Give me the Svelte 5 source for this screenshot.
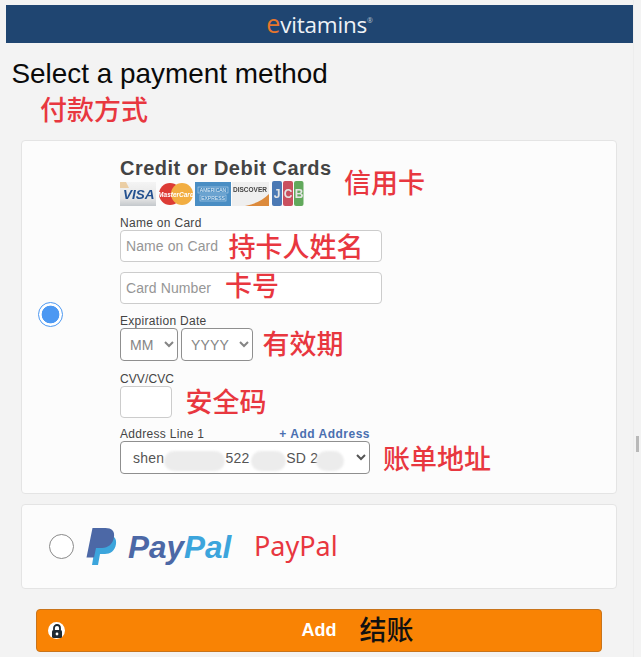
<script lang="ts">
  let method = $state('card')

  const notes = [
    { cls: 'n-title', text: '付款方式' },
    { cls: 'n-card', text: '信用卡' },
    { cls: 'n-name', text: '持卡人姓名' },
    { cls: 'n-number', text: '卡号' },
    { cls: 'n-exp', text: '有效期' },
    { cls: 'n-cvv', text: '安全码' },
    { cls: 'n-addr', text: '账单地址' },
    { cls: 'n-paypal', text: 'PayPal' },
    { cls: 'n-pay', text: '结账' }
  ]
</script>

<div class="screen">
  <div class="page">
    <header class="brand">
      <span class="logo"><span class="logo-e">e</span>vitamins<sup>®</sup></span>
    </header>

    <h1>Select a payment method</h1>

    <section class="card method-card">
      <div class="radio-col">
        <input type="radio" name="method" value="card" bind:group={method} />
      </div>
      <div class="form-col">
        <h2>Credit or Debit Cards</h2>
        <div class="brands">
          <svg width="184" height="26" viewBox="0 0 184 26">
            <defs>
              <linearGradient id="silver" x1="0" y1="0" x2="0" y2="1">
                <stop offset="0" stop-color="#f4f4f4" />
                <stop offset="0.7" stop-color="#e4e4e4" />
                <stop offset="1" stop-color="#c4c8cc" />
              </linearGradient>
            </defs>
            <!-- visa -->
            <rect x="0" y="1" width="36" height="24" fill="url(#silver)" />
            <path d="M0 1h6l3 6H0z" fill="#e8b872" opacity="0.6" />
            <text x="3" y="18" class="visa">VISA</text>
            <!-- mastercard -->
            <circle cx="50" cy="13" r="11" fill="#dd3b35" />
            <circle cx="62" cy="13" r="11" fill="#f2ae42" />
            <text x="56" y="15.5" class="mc">MasterCard</text>
            <!-- amex -->
            <rect x="75" y="1" width="36" height="24" fill="#4a8ec4" />
            <rect x="78" y="6" width="30" height="6" fill="none" stroke="#cfe2f1" stroke-width="0.500" />
            <rect x="80" y="14" width="26" height="6" fill="none" stroke="#cfe2f1" stroke-width="0.500" />
            <text x="93" y="11" class="amex">AMERICAN</text>
            <text x="93" y="19" class="amex">EXPRESS</text>
            <!-- discover -->
            <rect x="112" y="1" width="37" height="24" fill="#efefef" />
            <path d="M149 13v12h-24c10-2 18-6 24-12z" fill="#dc8a3c" />
            <text x="113" y="11" class="disc">DISCOVER</text>
            <!-- jcb -->
            <rect x="152" y="0" width="10" height="25" rx="2" fill="#4b79b4" />
            <rect x="163" y="0" width="10" height="25" rx="2" fill="#c9505f" />
            <rect x="174" y="0" width="9.500" height="25" rx="2" fill="#62a95c" />
            <text x="157" y="17" class="jcb">J</text>
            <text x="168" y="17" class="jcb">C</text>
            <text x="179" y="17" class="jcb">B</text>
          </svg>
        </div>

        <label class="lbl name-lbl" for="card-name">Name on Card</label>
        <input id="card-name" class="text wide" placeholder="Name on Card" />
        <input class="text wide number" placeholder="Card Number" aria-label="Card Number" />

        <label class="lbl exp-lbl" for="exp-month">Expiration Date</label>
        <div class="exp-row">
          <select id="exp-month" class="sel month"><option>MM</option></select>
          <select class="sel year" aria-label="Year"><option>YYYY</option></select>
        </div>

        <label class="lbl cvv-lbl" for="cvv">CVV/CVC</label>
        <input id="cvv" class="text cvv" />

        <div class="addr-head">
          <label class="lbl" for="addr">Address Line 1</label>
          <span class="add-link">+ Add Address</span>
        </div>
        <div class="addr-wrap">
          <select id="addr" class="sel addr">
            <option>shen&nbsp;&nbsp;&nbsp;&nbsp;&nbsp;&nbsp;&nbsp;&nbsp;&nbsp;&nbsp;&nbsp;&nbsp;&nbsp;&nbsp;&nbsp;522&nbsp;&nbsp;&nbsp;&nbsp;&nbsp;&nbsp;&nbsp;&nbsp;&nbsp;SD 2</option>
          </select>
          <span class="blur b1"></span>
          <span class="blur b2"></span>
          <span class="blur b3"></span>
        </div>
      </div>
    </section>

    <section class="card paypal-card">
      <input type="radio" name="method" value="paypal" bind:group={method} />
      <div class="paypal-logo">
        <svg width="32" height="37" viewBox="0 0 32 37">
          <path d="M11 7h11c5 0 9 3 8 9-1 7-6 10-11 10h-5l-2 11H6z" fill="#3ca5dc" />
          <path d="M6.500 0h13c6 0 9.500 3 8.500 9-1 7-6 11-12 11h-6l-2 9.500H0.500z" fill="#4c68a6" />
        </svg>
        <span class="pp-word"><span class="pp-a">Pay</span><span class="pp-b">Pal</span></span>
      </div>
    </section>

    <button class="add">
      <span class="lock">
        <svg width="12" height="14" viewBox="0 0 12 14">
          <path d="M3 6V4a3 3 0 0 1 6 0v2" fill="none" stroke="#1e2a33" stroke-width="1.800" />
          <rect x="1" y="6" width="10" height="8" rx="1.500" fill="#1e2a33" />
          <circle cx="6" cy="10" r="1.400" fill="#fff" />
        </svg>
      </span>
      Add
    </button>
  </div>

  <aside class="scroll"><span class="thumb"></span></aside>

  {#each notes as note}
    <span class="note {note.cls}">{note.text}</span>
  {/each}
</div>

<style>
  :global(body) {
    margin: 0;
    background: #f3f3f3;
  }

  .screen {
    position: relative;
    display: flex;
    width: 641px;
    height: 657px;
    overflow: hidden;
    font-family: "Liberation Sans", Arial, sans-serif;
  }

  .page {
    width: 627px;
    margin-left: 6px;
    padding-top: 5px;
    display: flex;
    flex-direction: column;
  }

  .brand {
    height: 38px;
    background: #1f4571;
    display: flex;
    align-items: center;
    justify-content: center;
  }

  .logo {
    font-family: "Open Sans", sans-serif;
    font-size: 22.500px;
    letter-spacing: -0.2px;
    color: #eef2f6;
    position: relative;
    top: -1px;
  }

  .logo-e {
    color: #e8762c;
    font-size: 25px;
  }

  .logo sup {
    font-size: 7px;
    vertical-align: 10px;
    line-height: 0;
    color: #b8c4d0;
  }

  h1 {
    margin: 16px 0 0 5.500px;
    font-size: 27.900px;
    line-height: 30px;
    font-weight: 400;
    color: #0a0a0a;
  }

  .card {
    margin-left: 15px;
    width: 596px;
    box-sizing: border-box;
    background: #fcfcfc;
    border: 1px solid #e4e4e4;
    border-radius: 4px;
  }

  .method-card {
    margin-top: 51px;
    height: 354px;
    display: flex;
  }

  .radio-col {
    width: 98px;
    display: flex;
    align-items: center;
    padding: 0 0 5px 16px;
    box-sizing: border-box;
  }

  input[type='radio'] {
    appearance: none;
    box-sizing: border-box;
    width: 25px;
    height: 25px;
    margin: 0;
    border: 1px solid #8a8a8a;
    border-radius: 50%;
    background: #fff;
  }

  input[type='radio']:checked {
    border-color: #4c98f2;
    background: radial-gradient(circle, #4c98f2 0 8.500px, #fff 9.200px);
  }

  .form-col {
    display: flex;
    flex-direction: column;
    align-items: flex-start;
    padding-top: 15px;
  }

  h2 {
    margin: 0;
    font-size: 20px;
    line-height: 24px;
    font-weight: 700;
    letter-spacing: 0.5px;
    color: #444;
  }

  .brands {
    height: 26px;
    margin-top: 1px;
  }

  .brands svg {
    display: block;
    filter: blur(0.3px);
  }

  .visa {
    font: italic 700 13.500px "Liberation Sans", sans-serif;
    fill: #23508f;
  }

  .mc {
    font: italic 700 6.500px "Liberation Sans", sans-serif;
    fill: #fff;
    text-anchor: middle;
  }

  .amex {
    font: 400 5px "Liberation Sans", sans-serif;
    fill: #e8f1f8;
    text-anchor: middle;
  }

  .disc {
    font: 700 6.500px "Liberation Sans", sans-serif;
    fill: #444;
  }

  .jcb {
    font: 700 12px "Liberation Sans", sans-serif;
    fill: #e4e4e4;
    text-anchor: middle;
  }

  .lbl {
    display: block;
    font-size: 12px;
    line-height: 14px;
    letter-spacing: 0.3px;
    color: #444;
  }

  .name-lbl {
    margin-top: 9px;
  }

  .text {
    box-sizing: border-box;
    border: 1px solid #ccc;
    border-radius: 4px;
    background: #fff;
    padding: 0 5px;
    font: 14px "Liberation Sans", sans-serif;
    letter-spacing: 0.1px;
    outline: none;
  }

  .text::placeholder {
    color: #969696;
  }

  .wide {
    width: 262px;
    height: 32px;
  }

  .number {
    margin-top: 10px;
  }

  .exp-lbl {
    margin-top: 10px;
  }

  .exp-row {
    display: flex;
    gap: 3px;
  }

  .sel {
    box-sizing: border-box;
    height: 33px;
    border: 1px solid #8f8f8f;
    border-radius: 4px;
    background: #fff;
    font: 14px "Liberation Sans", sans-serif;
    letter-spacing: 0.2px;
    color: #858585;
    padding-left: 5px;
  }

  .month {
    width: 58px;
  }

  .year {
    width: 72px;
  }

  .cvv-lbl {
    margin-top: 11px;
    letter-spacing: 0.1px;
  }

  .cvv {
    width: 52px;
    height: 32px;
  }

  .addr-head {
    width: 250px;
    margin-top: 8px;
    display: flex;
    justify-content: space-between;
    align-items: center;
    height: 15px;
  }

  .add-link {
    font-size: 12px;
    font-weight: 700;
    letter-spacing: 0.5px;
    color: #4a6fb0;
  }

  .addr-wrap {
    position: relative;
  }

  .addr {
    display: block;
    width: 250px;
    color: #555;
    padding-left: 8px;
  }

  .blur {
    position: absolute;
    top: 10px;
    height: 20px;
    background: #ececec;
    border-radius: 10px;
    filter: blur(1px);
  }

  .b1 {
    left: 44px;
    width: 61px;
  }

  .b2 {
    left: 131px;
    width: 35px;
  }

  .b3 {
    left: 196px;
    width: 28px;
  }

  .paypal-card {
    margin-top: 10px;
    height: 85px;
    display: flex;
    align-items: center;
    padding-left: 27px;
  }

  .paypal-logo {
    display: flex;
    align-items: center;
    margin-left: 12px;
    gap: 10px;
  }

  .paypal-logo svg {
    display: block;
  }

  .pp-word {
    font: italic 700 31.500px "Liberation Sans", sans-serif;
    position: relative;
    top: 1px;
  }

  .pp-a {
    color: #4c68a6;
  }

  .pp-b {
    color: #3ca5dc;
  }

  .add {
    position: relative;
    margin: 20px 0 0 30px;
    width: 566px;
    height: 43px;
    background: #f98304;
    border: 1px solid #c9741a;
    border-radius: 4px;
    color: #fff;
    font: 700 18px "Liberation Sans", sans-serif;
    padding: 0;
  }

  .lock {
    position: absolute;
    left: 11px;
    top: 12px;
    width: 17px;
    height: 17px;
    border-radius: 50%;
    background: #fff;
    display: flex;
    align-items: center;
    justify-content: center;
  }

  .scroll {
    flex: 1;
    border-left: 1px solid #ededed;
    position: relative;
  }

  .thumb {
    position: absolute;
    left: 2px;
    top: 436px;
    width: 3px;
    height: 16px;
    background: #b9b9b9;
  }

  .note {
    position: absolute;
    font-family: "Noto Sans CJK SC", sans-serif;
    font-size: 27px;
    line-height: 36px;
    font-weight: 500;
    color: #e8373f;
    white-space: nowrap;
  }

  .n-title { left: 40px; top: 91px; }
  .n-card { left: 344px; top: 164px; }
  .n-name { left: 228.500px; top: 228px; }
  .n-number { left: 225px; top: 267px; }
  .n-exp { left: 262.500px; top: 325px; }
  .n-cvv { left: 185.500px; top: 383px; }
  .n-addr { left: 383px; top: 440px; }
  .n-paypal { left: 254px; top: 528px; font-family: "Noto Sans", sans-serif; font-weight: 400; }
  .n-pay { left: 359.500px; top: 611px; color: #111; }
</style>
